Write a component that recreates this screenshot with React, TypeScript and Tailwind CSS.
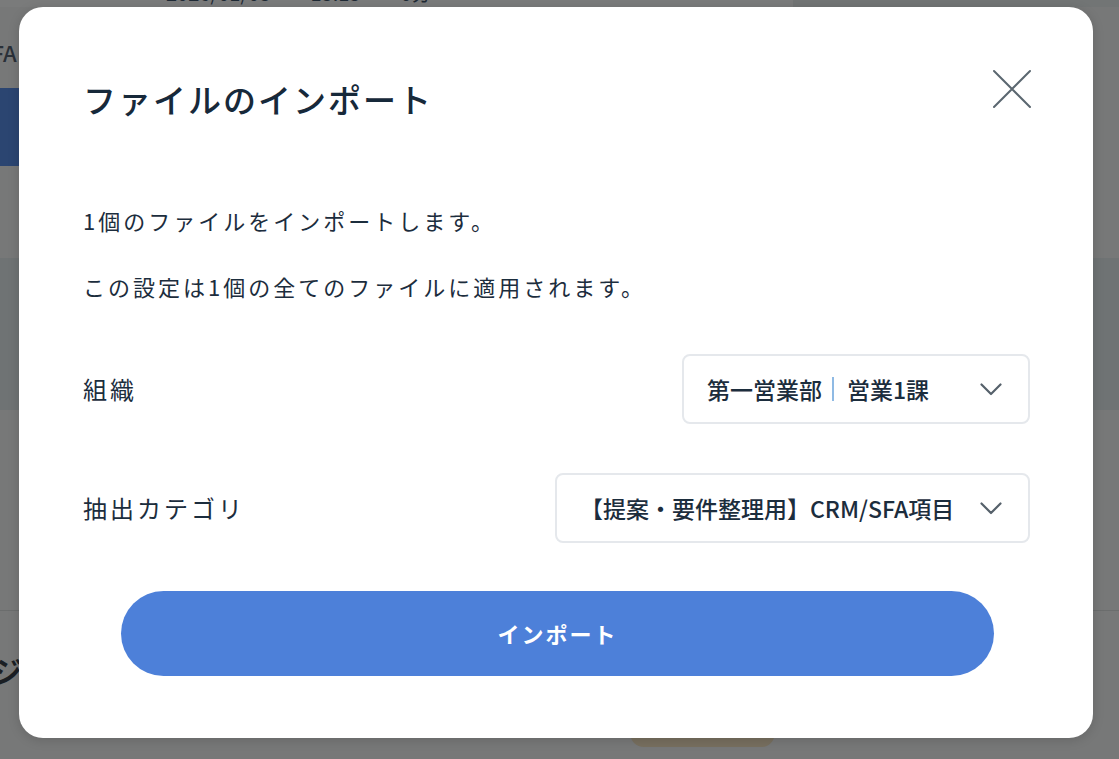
import React from "react";

function CloseIcon() {
  return (
    <svg width="40" height="40" viewBox="0 0 40 40" fill="none">
      <path d="M2 2L38 38M38 2L2 38" stroke="#5b6770" strokeWidth="2" strokeLinecap="round" />
    </svg>
  );
}

function Chevron() {
  return (
    <svg width="22" height="13" viewBox="0 0 22 13" fill="none">
      <path d="M1.5 1.5L11 11L20.5 1.5" stroke="#56616b" strokeWidth="2.2" strokeLinecap="round" strokeLinejoin="round" />
    </svg>
  );
}

function Backdrop() {
  return (
    <div className="absolute inset-0">
      <div className="absolute left-0 top-0 h-[7px] w-full bg-[#7a7b7b]" />
      <div className="absolute left-[793px] top-0 h-[7px] w-[326px] bg-[#727575]" />
      <div className="absolute left-[100px] top-[-18px] flex gap-[40px] text-[20px] leading-[22px] text-[#1f2a35]">
        <span className="pl-[66px]">2026/01/05</span>
        <span>15:15</span>
        <span>0分</span>
      </div>
      <div className="absolute left-[-22px] top-[36px] text-[22px] font-medium text-[#2a3038]">SFA</div>
      <div className="absolute left-0 top-[88px] h-[78px] w-[200px] bg-[#2b4571]" />
      <div className="absolute left-0 top-[258px] h-[152px] w-full bg-[#6f7374]" />
      <div className="absolute left-0 top-[610px] h-px w-full bg-[#6b6d6d]" />
      <div className="absolute left-[-8px] top-[648px] text-[30px] font-bold text-[#1b1f24]">ジ</div>
      <div className="absolute left-[630px] top-[725px] h-[22px] w-[145px] rounded-b-[14px] bg-[#776f5f]" />
    </div>
  );
}

export default function App() {
  return (
    <div className="relative h-[759px] w-[1119px] overflow-hidden bg-[#777878] font-['Noto_Sans_CJK_JP','Noto_Sans',sans-serif] text-[#1c2d3d]">
      <Backdrop />
      <div className="absolute left-[19px] top-[7px] flex h-[731px] w-[1074px] flex-col rounded-[24px] bg-white shadow-[0_2px_12px_rgba(0,0,0,0.15)]">
        <div className="flex items-start justify-between pl-[64px] pr-[61px] pt-[62px]">
          <h2 className="mt-[10px] text-[33px] font-medium leading-[40px] tracking-[2px] text-[#17293a]">
            ファイルのインポート
          </h2>
          <button className="h-[40px] w-[40px]">
            <CloseIcon />
          </button>
        </div>

        <div className="mt-[85px] flex flex-col gap-[34px] pl-[64px] pr-[63px] text-[22px] leading-[32px] tracking-[3px]">
          <p>1個のファイルをインポートします。</p>
          <p>この設定は1個の全てのファイルに適用されます。</p>
        </div>

        <div className="mt-[52px] flex flex-col gap-[49px] pl-[64px] pr-[63px]">
          <div className="flex items-center justify-between">
            <span className="text-[24px] tracking-[3px]">組織</span>
            <div className="flex h-[70px] w-[348px] items-center justify-between rounded-[8px] border-2 border-[#e5e8ec] pl-[23px] pr-[26px]">
              <span className="flex items-center text-[23px] font-medium">
                第一営業部
                <span className="ml-[10px] mr-[13px] h-[24px] w-[2px] bg-[#8fbae4]" />
                営業1課
              </span>
              <Chevron />
            </div>
          </div>
          <div className="flex items-center justify-between">
            <span className="text-[24px] tracking-[3px]">抽出カテゴリ</span>
            <div className="flex h-[70px] w-[475px] items-center justify-between rounded-[8px] border-2 border-[#e5e8ec] pl-[23px] pr-[26px]">
              <span className="text-[23px] font-medium">【提案・要件整理用】CRM/SFA項目</span>
              <Chevron />
            </div>
          </div>
        </div>

        <div className="mt-[48px] pl-[102px] pr-[99px]">
          <button className="flex h-[85px] w-full items-center justify-center rounded-full bg-[#4d80d9] text-[22px] font-bold tracking-[2px] text-white">
            インポート
          </button>
        </div>
      </div>
    </div>
  );
}
